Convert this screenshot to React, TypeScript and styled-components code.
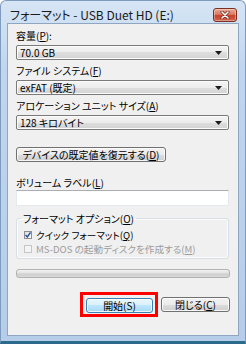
import React from 'react';
import styled, { createGlobalStyle } from 'styled-components';

const FONT = `"Noto Sans CJK JP", "Noto Sans", sans-serif`;

const GlobalStyle = createGlobalStyle`
  html, body {
    margin: 0;
    padding: 0;
  }
  body {
    width: 246px;
    height: 344px;
    overflow: hidden;
    background: #ffffff;
  }
`;

/* window frame */
const Window = styled.div`
  box-sizing: border-box;
  width: 246px;
  height: 344px;
  display: flex;
  flex-direction: column;
  padding: 0 6px 5px 6px;
  background: linear-gradient(to bottom, #d6e5f5 0%, #c0d6ee 20%, #b6cdea 100%);
  border: 1px solid #7f9cbf;
  border-bottom: 3px solid #2c6a8c;
  border-radius: 6px 6px 0 0;
  font-family: ${FONT};
  font-feature-settings: 'palt';
  color: #000;
`;

const TitleBar = styled.div`
  box-sizing: border-box;
  height: 22px;
  margin: 0 -6px;
  padding: 6px 8px 0 9px;
  display: flex;
  align-items: center;
  justify-content: space-between;
`;

const TitleText = styled.div`
  font-size: 12px;
  line-height: 14px;
  color: #1a1a1a;
  white-space: nowrap;
`;

const CloseBox = styled.div`
  box-sizing: border-box;
  width: 24px;
  height: 14px;
  display: flex;
  align-items: center;
  justify-content: center;
  border: 1px solid #7a2f22;
  border-radius: 3px;
  background: linear-gradient(to bottom, #eca896 0%, #dc7a62 45%, #c9412a 55%, #d4664e 100%);
  box-shadow: inset 0 0 0 1px rgba(255, 255, 255, 0.35);
`;

/* client area */
const Client = styled.div`
  flex: 1;
  display: flex;
  flex-direction: column;
  padding: 5px 9px 0 8px;
  background: #f0f0f0;
  border: 1px solid #8ea6c2;
  font-size: 10px;
`;

const Label = styled.div<{ $gap?: number }>`
  height: 13px;
  line-height: 13px;
  margin-top: ${p => p.$gap ?? 0}px;
  margin-bottom: 3px;
  white-space: nowrap;
`;

const Key = styled.span`
  text-decoration: underline;
`;

const Combo = styled.div`
  box-sizing: border-box;
  height: 15px;
  display: flex;
  align-items: center;
  justify-content: space-between;
  padding: 0 6px 0 3px;
  border: 1px solid #7a7a7a;
  border-radius: 2px;
  background: linear-gradient(to bottom, #f4f4f4 0%, #ececec 50%, #dedede 50%, #d3d3d3 100%);
  box-shadow: inset 0 0 0 1px #fbfbfb;
  font-size: 10px;
  line-height: 13px;
  white-space: nowrap;
`;

const Gap = styled.div<{ $h: number }>`
  height: ${p => p.$h}px;
  flex: none;
`;

const Button = styled.div<{ $width: number; $primary?: boolean }>`
  box-sizing: border-box;
  width: ${p => p.$width}px;
  height: 15px;
  display: flex;
  align-items: center;
  justify-content: center;
  border: 1px solid ${p => (p.$primary ? '#3c7fb1' : '#707070')};
  border-radius: 3px;
  background: ${p =>
    p.$primary
      ? 'linear-gradient(to bottom, #eaf6fd 0%, #d9f0fc 50%, #bee6fd 50%, #a7d9f5 100%)'
      : 'linear-gradient(to bottom, #f2f2f2 0%, #ebebeb 50%, #dddddd 50%, #cfcfcf 100%)'};
  box-shadow: inset 0 0 0 1px rgba(255, 255, 255, 0.8);
  font-size: 10px;
  line-height: 13px;
  white-space: nowrap;
`;

const TextBox = styled.div`
  box-sizing: border-box;
  height: 16px;
  margin-top: -2px;
  background: #ffffff;
  border: 1px solid #e3e9ef;
  border-top-color: #abadb3;
`;

const Group = styled.fieldset`
  margin: 6px 0 0 0;
  padding: 3px 8px 2px 7px;
  border: 1px solid #d5dfe5;
  border-radius: 3px;
  box-shadow: inset 0 0 0 1px #fcfcfc;
`;

const Legend = styled.legend`
  padding: 0 2px;
  margin-left: -3px;
  height: 13px;
  line-height: 13px;
  font-size: 10px;
`;

const CheckRow = styled.div<{ $disabled?: boolean }>`
  height: 14px;
  display: flex;
  align-items: center;
  gap: 4px;
  font-size: 9.6px;
  line-height: 14px;
  white-space: nowrap;
  color: ${p => (p.$disabled ? '#9c9c9c' : '#000')};
`;

const CheckBox = styled.div<{ $disabled?: boolean }>`
  box-sizing: border-box;
  width: 8px;
  height: 8px;
  display: flex;
  align-items: center;
  justify-content: center;
  border: 1px solid ${p => (p.$disabled ? '#c6c6c6' : '#8e8f8f')};
  background: ${p =>
    p.$disabled ? '#f4f4f4' : 'linear-gradient(135deg, #dcdcdc 0%, #ffffff 100%)'};
`;

const Progress = styled.div`
  box-sizing: border-box;
  height: 9px;
  margin-right: -1px;
  border: 1px solid #b2b2b2;
  border-radius: 3px;
  background: linear-gradient(to bottom, #f2f2f2 0%, #e2e2e2 45%, #cdcdcd 55%, #d9d9d9 100%);
`;

const ButtonRow = styled.div`
  display: flex;
  justify-content: flex-end;
  align-items: center;
  margin-right: -1px;
`;

const Highlight = styled.div`
  padding: 3px 2px 1px 3px;
  border: 3px solid #ff0000;
  margin-right: 3px;
`;

const Arrow = () => (
  <svg width="7" height="4" viewBox="0 0 7 4">
    <polygon points="0,0 7,0 3.5,4" fill="#1b1b1b" />
  </svg>
);

const Field = ({ label, value, gap }: { label: React.ReactNode; value: string; gap?: number }) => (
  <>
    <Label $gap={gap}>{label}</Label>
    <Combo>
      <span>{value}</span>
      <Arrow />
    </Combo>
  </>
);

export default function App() {
  return (
    <>
      <GlobalStyle />
      <Window>
        <TitleBar>
          <TitleText>フォーマット - USB Duet HD (E:)</TitleText>
          <CloseBox>
            <svg width="10" height="8" viewBox="0 0 10 8">
              <path d="M2 1 L8 7 M8 1 L2 7" stroke="#6b2418" strokeWidth="3" strokeLinecap="round" />
              <path d="M2 1 L8 7 M8 1 L2 7" stroke="#ffffff" strokeWidth="1.6" strokeLinecap="round" />
            </svg>
          </CloseBox>
        </TitleBar>
        <Client>
          <Field label={<>容量(<Key>P</Key>):</>} value="70.0 GB" />
          <Field gap={4} label={<>ファイル システム(<Key>F</Key>)</>} value="exFAT (既定)" />
          <Field gap={4} label={<>アロケーション ユニット サイズ(<Key>A</Key>)</>} value="128 キロバイト" />
          <Gap $h={17} />
          <Button $width={150}>
            <span>
              デバイスの既定値を復元する(<Key>D</Key>)
            </span>
          </Button>
          <Label $gap={14}>
            ボリューム ラベル(<Key>L</Key>)
          </Label>
          <TextBox />
          <Group>
            <Legend>
              フォーマット オプション(<Key>O</Key>)
            </Legend>
            <CheckRow>
              <CheckBox>
                <svg width="6" height="6" viewBox="0 0 6 6">
                  <path d="M0.5 3 L2.3 5 L5.5 0.5" stroke="#2a4f9c" strokeWidth="1.4" fill="none" />
                </svg>
              </CheckBox>
              <span>
                クイック フォーマット(<Key>Q</Key>)
              </span>
            </CheckRow>
            <CheckRow $disabled>
              <CheckBox $disabled />
              <span>
                MS-DOS の起動ディスクを作成する(<Key>M</Key>)
              </span>
            </CheckRow>
          </Group>
          <Gap $h={10} />
          <Progress />
          <Gap $h={14} />
          <ButtonRow>
            <Highlight>
              <Button $width={67} $primary>
                開始(S)
              </Button>
            </Highlight>
            <Button $width={69}>
              <span>
                閉じる(<Key>C</Key>)
              </span>
            </Button>
          </ButtonRow>
        </Client>
      </Window>
    </>
  );
}
